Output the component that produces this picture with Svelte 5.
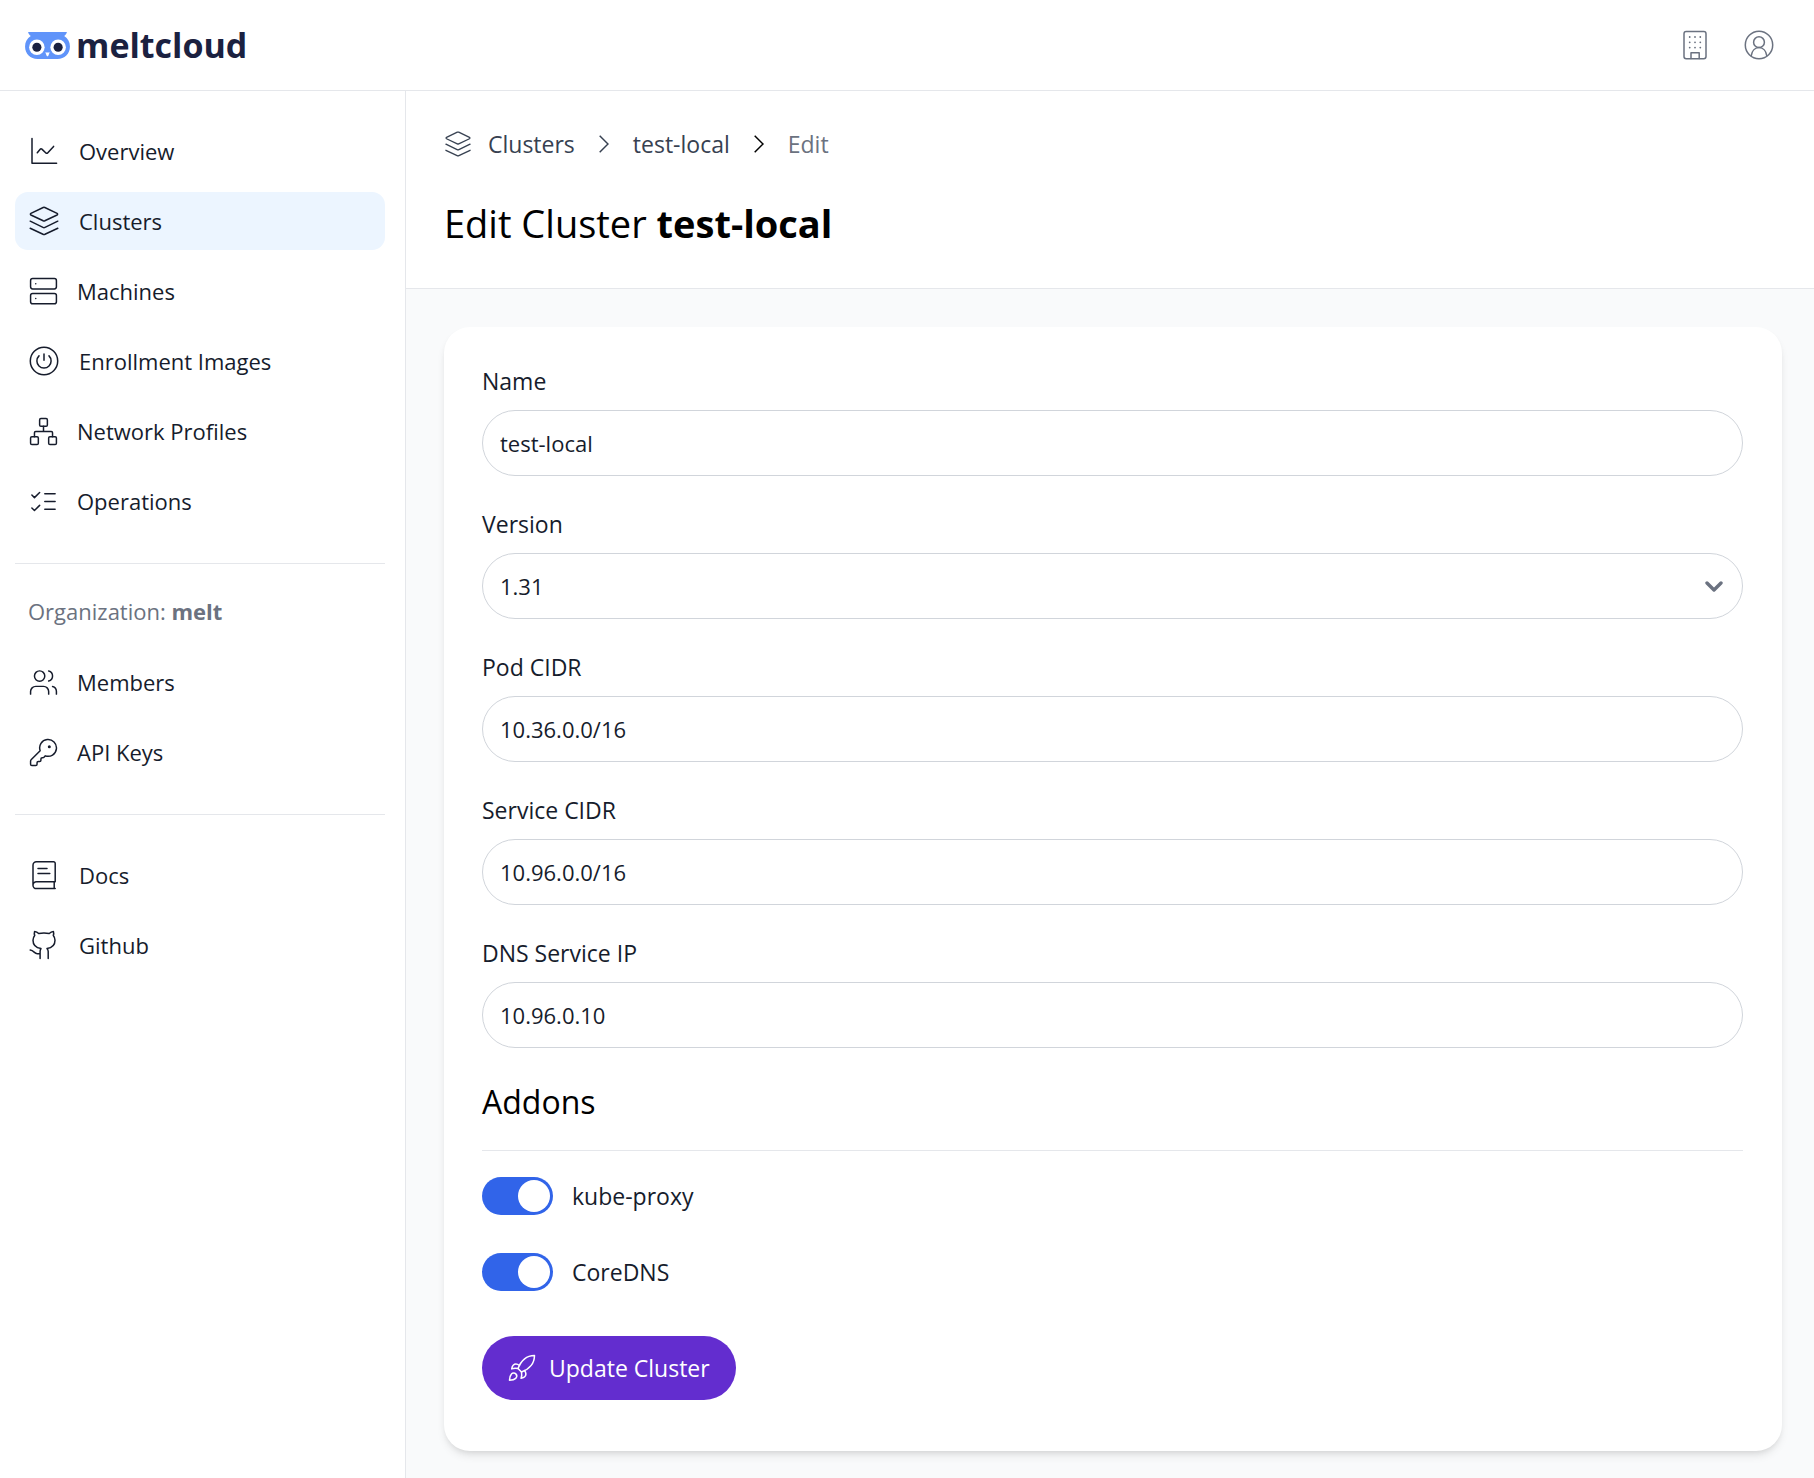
<script>
  const mainNav = [
    { label: 'Overview', icon: 'chart', wide: true },
    { label: 'Clusters', icon: 'stack', wide: true, active: true },
    { label: 'Machines', icon: 'server' },
    { label: 'Enrollment Images', icon: 'power', wide: true },
    { label: 'Network Profiles', icon: 'network' },
    { label: 'Operations', icon: 'checks' },
  ];
  const orgNav = [
    { label: 'Members', icon: 'users' },
    { label: 'API Keys', icon: 'key' },
  ];
  const linkNav = [
    { label: 'Docs', icon: 'book', wide: true },
    { label: 'Github', icon: 'github', wide: true },
  ];

  let name = $state('test-local');
  let version = $state('1.31');
  let podCidr = $state('10.36.0.0/16');
  let serviceCidr = $state('10.96.0.0/16');
  let dnsIp = $state('10.96.0.10');
  let kubeProxy = $state(true);
  let coreDns = $state(true);
</script>

{#snippet stack()}
  <svg class="icon" viewBox="0 0 32 32" aria-hidden="true">
    <path d="M15.2 2.5 2.9 8.4a.9.9 0 0 0 0 1.6l12.3 5.8a2 2 0 0 0 1.6 0L29.1 10a.9.9 0 0 0 0-1.6L16.8 2.5a2 2 0 0 0-1.6 0Z" />
    <path d="m2.2 16.2 12.8 6.2a2.2 2.2 0 0 0 2 0l12.8-6.2M2.2 23.2 15 29.3a2.2 2.2 0 0 0 2 0l12.8-6.1" />
  </svg>
{/snippet}

{#snippet icon(kind)}
  {#if kind === 'stack'}
    {@render stack()}
  {:else if kind === 'chart'}
    <svg class="icon" viewBox="0 0 32 32" aria-hidden="true">
      <path d="M4 3.5v24.8h24.6M9.3 17.8l2.9-3.6a1.2 1.2 0 0 1 1.7-.1l4 3.9a1.2 1.2 0 0 0 1.7 0l6-6.6" />
    </svg>
  {:else if kind === 'power'}
    <svg class="icon" viewBox="0 0 32 32" aria-hidden="true">
      <circle cx="16" cy="16" r="13.7" />
      <path d="M11 10.9a7.1 7.1 0 1 0 10 0M16 9v6.3" />
    </svg>
  {:else if kind === 'book'}
    <svg class="icon" viewBox="0 0 32 32" aria-hidden="true">
      <path d="M8.4 22.8h18.8V4.4a1.6 1.6 0 0 0-1.6-1.6H8.4A3.4 3.4 0 0 0 5 6.2v20a3.4 3.4 0 0 0 3.4 3.4h18.8M5 26.2a3.4 3.4 0 0 1 3.4-3.4M26.2 22.8v6.8M10 9.4h9M10 14.4h11.8" />
    </svg>
  {:else if kind === 'github'}
    <svg class="icon" viewBox="0 0 32 32" aria-hidden="true">
      <path d="M12.1 29.5v-6.9c0-1.2.3-2.2.9-3.1-4.7-.6-8-2.8-8-8.2 0-2.1.6-3.600 1.700-4.900-.5-1.300-.5-2.700-.1-4 1.700.1 3 .9 4.100 2.100 3.500-.7 7-.7 10.500 0 1.200-1.200 2.600-2 4.200-2.100.4 1.300.4 2.700-.1 4 1.100 1.300 1.700 2.800 1.700 4.900 0 5.400-3.300 7.600-8 8.200.8.900 1.200 1.900 1.200 3.100v6.900M12.1 24.700H9.300c-3 0-3.300-3.200-7.100-3.600" />
    </svg>
  {:else if kind === 'server'}
    <svg class="icon" viewBox="0 0 24 24" aria-hidden="true">
      <rect x="2" y="2" width="20" height="8" rx="1.6" />
      <rect x="2" y="13.5" width="20" height="8" rx="1.6" />
      <path d="M6 6h.01M6 17.5h.01" />
    </svg>
  {:else if kind === 'network'}
    <svg class="icon" viewBox="0 0 24 24" aria-hidden="true">
      <rect x="16" y="16" width="6" height="6" rx="1" />
      <rect x="2" y="16" width="6" height="6" rx="1" />
      <rect x="9" y="2" width="6" height="6" rx="1" />
      <path d="M5 16v-3a1 1 0 0 1 1-1h12a1 1 0 0 1 1 1v3M12 12V8" />
    </svg>
  {:else if kind === 'checks'}
    <svg class="icon" viewBox="0 0 24 24" aria-hidden="true">
      <path d="m3 17 2 2 4-4M3 7l2 2 4-4M13 6h8M13 12h8M13 18h8" />
    </svg>
  {:else if kind === 'users'}
    <svg class="icon" viewBox="0 0 24 24" aria-hidden="true">
      <path d="M16 21v-2a4 4 0 0 0-4-4H6a4 4 0 0 0-4 4v2" />
      <circle cx="9" cy="7" r="4" />
      <path d="M22 21v-2a4 4 0 0 0-3-3.870M16 3.130a4 4 0 0 1 0 7.750" />
    </svg>
  {:else if kind === 'key'}
    <svg class="icon" viewBox="0 0 24 24" aria-hidden="true">
      <path d="M2.586 17.414A2 2 0 0 0 2 18.828V21a1 1 0 0 0 1 1h3a1 1 0 0 0 1-1v-1a1 1 0 0 1 1-1h1a1 1 0 0 0 1-1v-1a1 1 0 0 1 1-1h.172a2 2 0 0 0 1.414-.586l.814-.814a6.500 6.500 0 1 0-4-4z" />
      <circle cx="16.5" cy="7.5" r=".6" fill="currentColor" />
    </svg>
  {/if}
{/snippet}

{#snippet navItem(item)}
  <a class="nav-item" class:wide={item.wide} class:active={item.active} href="#{item.icon}" aria-current={item.active ? 'page' : undefined}>
    {@render icon(item.icon)}
    <span>{item.label}</span>
  </a>
{/snippet}

<div class="app">
  <header class="topbar">
    <a class="brand" href="#home">
      <svg class="owl" viewBox="0 0 133 80" aria-hidden="true">
        <path fill="#6094fa" d="M9 0h115c-1 5-4 9-8 12 11 7 17 18 17 31 0 22-16 37-37 37H37C16 80 0 65 0 43 0 30 6 19 17 12 13 9 10 5 9 0Z" />
        <circle cx="35" cy="45" r="23" fill="#fff" />
        <circle cx="98" cy="45" r="23" fill="#fff" />
        <circle cx="35" cy="45" r="13.5" fill="#1b2140" />
        <circle cx="98" cy="45" r="13.5" fill="#1b2140" />
        <path fill="#fff" d="M60 60q7 2 13 0l-4 10q-2.500 3-5 0Z" />
      </svg>
      <span>meltcloud</span>
    </a>
    <div class="top-actions">
      <button type="button" aria-label="Organization">
        <svg class="icon" viewBox="0 0 32 32" aria-hidden="true">
          <rect x="5" y="2.5" width="22" height="27.3" rx="2.2" />
          <path d="M12 29.600v-5.800h8.200v5.800" />
          <path class="dots" d="M10.700 8h.01M16 8h.01M21.300 8h.01M10.700 13.300h.01M16 13.300h.01M21.300 13.300h.01M10.700 18.600h.01M16 18.600h.01M21.300 18.600h.01" />
        </svg>
      </button>
      <button type="button" aria-label="Account">
        <svg class="icon" viewBox="0 0 32 32" aria-hidden="true">
          <circle cx="16" cy="16" r="13.7" />
          <circle cx="16" cy="13.2" r="5.4" />
          <path d="M8.200 26.800c.6-4.800 3.600-8.200 7.800-8.200s7.200 3.400 7.800 8.200" />
        </svg>
      </button>
    </div>
  </header>

  <div class="body">
    <nav class="sidebar" aria-label="Main">
      <div class="group">
        {#each mainNav as item}{@render navItem(item)}{/each}
      </div>
      <div class="group org">
        <p class="org-name">Organization: <strong>melt</strong></p>
        {#each orgNav as item}{@render navItem(item)}{/each}
      </div>
      <div class="group">
        {#each linkNav as item}{@render navItem(item)}{/each}
      </div>
    </nav>

    <main>
      <div class="page-head">
        <nav class="crumbs" aria-label="Breadcrumb">
          <a class="crumb-root" href="#stack">{@render stack()}Clusters</a>
          <svg class="sep" viewBox="0 0 10 18" aria-hidden="true"><path d="m.7.7 8.300 8.300-8.300 8.300" /></svg>
          <a href="#test-local">test-local</a>
          <svg class="sep dark" viewBox="0 0 10 18" aria-hidden="true"><path d="m.7.7 8.300 8.300-8.300 8.300" /></svg>
          <span class="current" aria-current="page">Edit</span>
        </nav>
        <h1>Edit Cluster <strong>test-local</strong></h1>
      </div>

      <div class="content">
        <form class="card" onsubmit={(e) => e.preventDefault()}>
          <div class="field">
            <label for="name">Name</label>
            <input id="name" type="text" bind:value={name} />
          </div>
          <div class="field">
            <label for="version">Version</label>
            <div class="select">
              <select id="version" bind:value={version}>
                <option>1.31</option>
                <option>1.30</option>
                <option>1.29</option>
              </select>
              <svg class="caret" viewBox="0 0 18 11" aria-hidden="true"><path d="m2 2 7 7 7-7" /></svg>
            </div>
          </div>
          <div class="field">
            <label for="pod">Pod CIDR</label>
            <input id="pod" type="text" bind:value={podCidr} />
          </div>
          <div class="field">
            <label for="service">Service CIDR</label>
            <input id="service" type="text" bind:value={serviceCidr} />
          </div>
          <div class="field">
            <label for="dns">DNS Service IP</label>
            <input id="dns" type="text" bind:value={dnsIp} />
          </div>

          <section class="addons">
            <h2>Addons</h2>
            <label class="switch"><input type="checkbox" bind:checked={kubeProxy} />kube-proxy</label>
            <label class="switch"><input type="checkbox" bind:checked={coreDns} />CoreDNS</label>
          </section>

          <button class="submit" type="submit">
            <svg class="icon" viewBox="0 0 28 28" aria-hidden="true">
              <path d="M10 14.500c1.500-4 3.600-7.300 6.600-9.700C19.300 2.600 22.800 1.600 26.500 1.500c-.1 3.700-1.100 7.200-3.300 9.900-2.400 3-5.700 5.100-9.700 6.600Z" />
              <path d="M11.500 11.500c-2.500-1.800-4.800-1.700-6.300-.2-.8.800-1.200 2-1.500 3.600 1.900-.8 3.900-.8 6.300-.4M16.500 16.500c1.800 2.500 1.700 4.800.2 6.300-.8.800-2 1.200-3.600 1.500.8-1.900.8-3.900.4-6.300" />
              <path d="M7.800 19.900c1.200 1.200 1.100 3.200-.1 4.500-1.300 1.300-3.600 1.800-6.200 1.900.1-2.600.6-4.900 1.900-6.200 1.200-1.300 3.200-1.400 4.400-.2Z" />
            </svg>
            Update Cluster
          </button>
        </form>
      </div>
    </main>
  </div>
</div>

<style>
  :global(body) {
    margin: 0;
    background: #fff;
  }

  .app {
    display: flex;
    flex-direction: column;
    min-height: 100vh;
    font-family: 'Open Sans', 'Noto Sans', sans-serif;
    font-size: 22px;
    line-height: 32px;
    color: #161c2c;
  }

  .app *,
  .app *::before {
    box-sizing: border-box;
  }

  a {
    color: inherit;
    text-decoration: none;
  }

  button,
  input,
  select {
    font: inherit;
    color: inherit;
    margin: 0;
  }

  svg {
    display: block;
    flex: none;
    fill: none;
  }

  .icon {
    width: 32px;
    height: 32px;
    stroke: currentColor;
    stroke-width: 1.5;
    stroke-linecap: round;
    stroke-linejoin: round;
  }

  .icon[viewBox='0 0 24 24'] {
    width: 31px;
    height: 31px;
    stroke-width: 1.15;
  }

  .topbar {
    display: flex;
    align-items: center;
    justify-content: space-between;
    height: 91px;
    padding: 0 39px 0 25px;
    border-bottom: 1px solid #e5e7eb;
  }

  .brand {
    display: flex;
    align-items: center;
    gap: 6px;
    font-size: 34px;
    font-weight: 700;
    color: #1b2140;
  }

  .owl {
    width: 45px;
    height: 27px;
  }

  .top-actions {
    display: flex;
    gap: 32px;
  }

  .top-actions button {
    padding: 0;
    border: 0;
    background: none;
    color: #6b7280;
    cursor: pointer;
  }

  .dots {
    stroke-width: 1.8;
  }

  .body {
    display: flex;
    flex: 1;
  }

  .sidebar {
    flex: none;
    width: 406px;
    padding: 31px 20px 31px 15px;
    border-right: 1px solid #e5e7eb;
  }

  .group {
    display: flex;
    flex-direction: column;
    gap: 12px;
  }

  .group + .group {
    margin-top: 33px;
    padding-top: 31px;
    border-top: 1px solid #e5e7eb;
  }

  .group + .org {
    padding-top: 18px;
  }

  .nav-item {
    display: flex;
    align-items: center;
    gap: 18px;
    padding: 13px;
    border-radius: 13px;
  }

  .nav-item.wide {
    gap: 19px;
  }

  .nav-item.active {
    background: #ecf5ff;
  }

  .org-name {
    margin: 0;
    padding: 13px 13px 14px;
    color: #6b7280;
  }

  main {
    flex: 1;
    min-width: 0;
    display: flex;
    flex-direction: column;
    background: #f9fafb;
  }

  .page-head {
    padding: 37px 38px 39px;
    background: #fff;
    border-bottom: 1px solid #e5e7eb;
  }

  .crumbs {
    display: flex;
    align-items: center;
    gap: 24px;
    font-size: 23px;
    font-weight: 500;
    color: #374151;
  }

  .crumb-root {
    display: flex;
    align-items: center;
    gap: 16px;
  }

  .crumb-root .icon {
    width: 28px;
    height: 28px;
  }

  .sep {
    width: 10px;
    height: 18px;
    stroke: currentColor;
    stroke-width: 1.5;
  }

  .sep.dark {
    color: #000;
  }

  .current {
    color: #6b7280;
  }

  h1,
  h2 {
    margin: 0;
    font-weight: 400;
    color: #000;
  }

  h1 {
    margin-top: 37px;
    font-size: 38px;
    line-height: 52px;
  }

  .content {
    padding: 38px 32px 26px 38px;
  }

  .card {
    display: flex;
    flex-direction: column;
    gap: 32px;
    padding: 38px 39px 51px 38px;
    border-radius: 26px;
    background: #fff;
    box-shadow: 0 6px 10px -2px rgb(0 0 0 / 0.1), 0 3px 6px -3px rgb(0 0 0 / 0.1);
  }

  .field {
    display: flex;
    flex-direction: column;
    gap: 13px;
  }

  .field label {
    font-size: 23px;
    font-weight: 500;
  }

  .field input,
  .select select {
    width: 100%;
    height: 66px;
    padding: 0 17px;
    border: 1px solid #d1d5db;
    border-radius: 33px;
    background: #fff;
    appearance: none;
  }

  .select {
    display: grid;
    align-items: center;
  }

  .select > * {
    grid-area: 1 / 1;
  }

  .caret {
    width: 18px;
    height: 11px;
    margin-right: 20px;
    justify-self: end;
    pointer-events: none;
    stroke: #6b7280;
    stroke-width: 3.4;
    stroke-linecap: round;
    stroke-linejoin: round;
  }

  .addons {
    display: flex;
    flex-direction: column;
  }

  h2 {
    padding-bottom: 26px;
    border-bottom: 1px solid #e5e7eb;
    font-size: 32px;
    line-height: 44px;
  }

  .switch {
    display: flex;
    align-items: center;
    gap: 19px;
    margin-top: 38px;
    font-size: 23px;
    font-weight: 500;
  }

  h2 + .switch {
    margin-top: 26px;
  }

  .switch input {
    width: 71px;
    height: 38px;
    padding: 3px;
    border-radius: 19px;
    background: #d1d5db;
    appearance: none;
    cursor: pointer;
  }

  .switch input::before {
    content: '';
    display: block;
    width: 32px;
    height: 32px;
    border-radius: 50%;
    background: #fff;
  }

  .switch input:checked {
    background: #3164e9;
  }

  .switch input:checked::before {
    margin-left: auto;
  }

  .submit {
    display: flex;
    align-items: center;
    align-self: flex-start;
    gap: 13px;
    height: 64px;
    margin-top: 13px;
    padding: 0 26px;
    border: 0;
    border-radius: 32px;
    background: #632dcf;
    color: #fff;
    font-size: 23px;
    font-weight: 500;
    cursor: pointer;
  }

  .submit .icon {
    width: 28px;
    height: 28px;
  }
</style>
